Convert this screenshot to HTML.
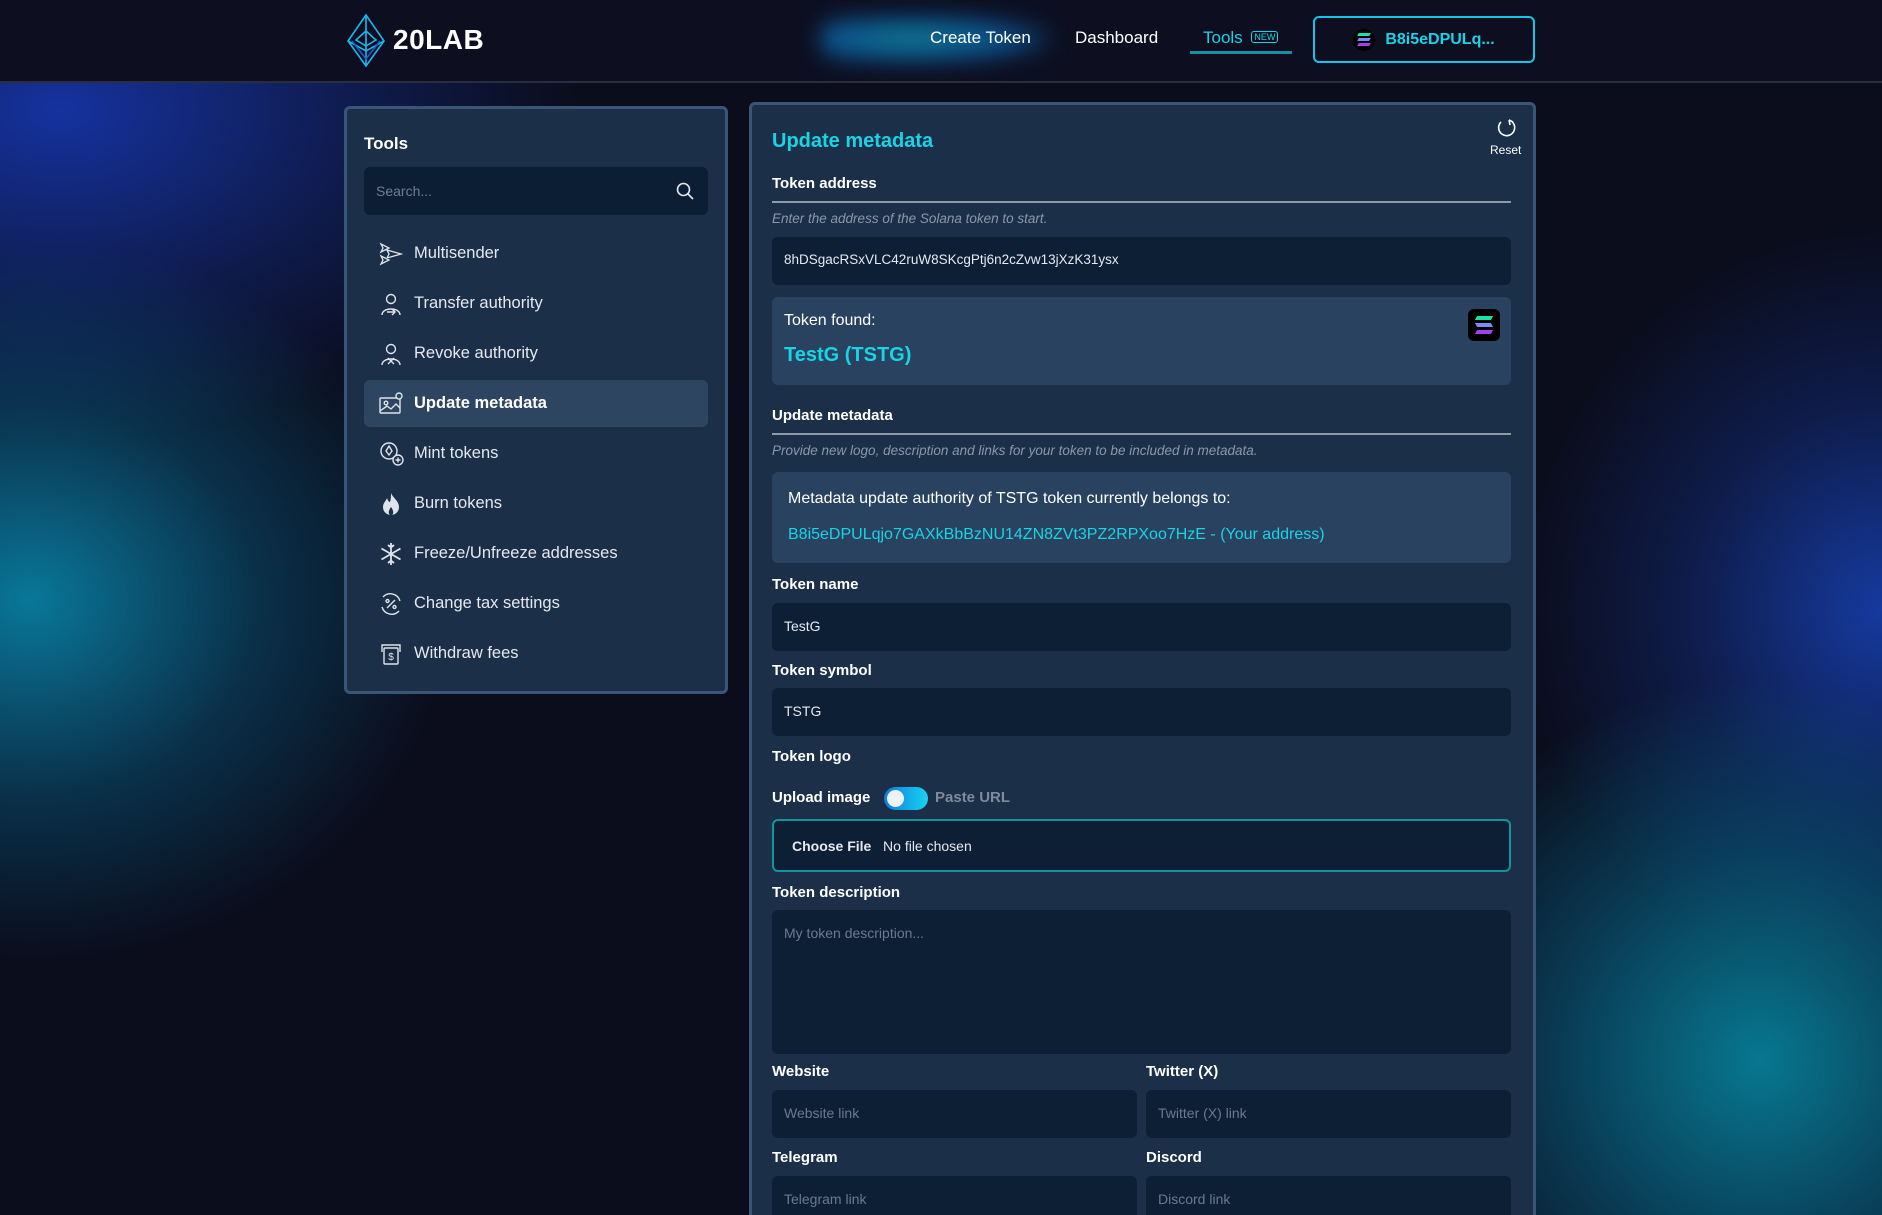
<!DOCTYPE html>
<html><head><meta charset="utf-8"><style>
*{box-sizing:border-box;margin:0;padding:0}
html,body{width:1882px;height:1215px;overflow:hidden;background:#0b0d1c}
body{font-family:"Liberation Sans",sans-serif;color:#fff}
#w{position:relative;width:1882px;height:1215px;overflow:hidden;
background:
radial-gradient(ellipse 420px 360px at 30px 600px,rgba(9,125,160,.95),rgba(9,100,140,.4) 55%,transparent 100%),
radial-gradient(ellipse 520px 330px at 60px 110px,rgba(22,52,165,.95),rgba(20,45,140,.4) 60%,transparent 100%),
radial-gradient(ellipse 380px 380px at 1760px 1060px,rgba(8,125,150,.95),rgba(8,100,135,.5) 55%,transparent 100%),
radial-gradient(ellipse 360px 380px at 1882px 610px,rgba(22,60,165,.95),rgba(20,50,140,.4) 55%,transparent 100%),
#0b0d1c;}
.hdr{position:absolute;left:0;top:0;width:1882px;height:83px;background:#0d0f21;border-bottom:2px solid #2a2d40}
.glow{position:absolute;left:820px;top:14px;width:230px;height:50px;border-radius:25px;background:radial-gradient(ellipse at 40% 50%,#0f7a8c 0%,#0c4e8a 50%,transparent 80%);filter:blur(10px)}
.nav{position:absolute;top:28px;font-size:17px}
.btn{position:absolute;left:1313px;top:16px;width:222px;height:47px;border:2px solid #13c6ea;border-radius:6px;color:#19d3e6;font-weight:bold;font-size:16px;display:flex;align-items:center;justify-content:center;gap:10px}
.sol{width:22px;height:22px;border-radius:50%;background:#000;display:flex;flex-direction:column;justify-content:center;align-items:center;gap:2px}
.sol i{display:block;width:12px;height:3px;transform:skewX(-30deg)}
.side{position:absolute;left:344px;top:106px;width:384px;height:588px;background:#1b2f49;border:3px solid #3a5677;border-radius:6px}
.side h3{position:absolute;left:17px;top:25px;font-size:17px}
.search{position:absolute;left:17px;top:58px;width:344px;height:48px;background:#0c1e33;border-radius:6px;color:#6d7e92;font-size:14px;padding:16px 12px}
.item{position:absolute;left:17px;width:344px;height:47px;display:flex;align-items:center;font-size:16.5px;color:#e5e9ef}
.item svg{position:absolute;left:15px}
.item span{position:absolute;left:50px}
.item.act{background:#2d4560;border-radius:6px;font-weight:bold;color:#fff}
.main{position:absolute;left:749px;top:102px;width:787px;height:1130px;background:#1b2f49;border:3px solid #3a5677;border-radius:6px}
.a{position:absolute}
.lbl{position:absolute;left:20px;font-size:15px;font-weight:bold}
.hint{position:absolute;left:20px;font-size:13.5px;font-style:italic;color:#8b98a8}
.line{position:absolute;left:20px;width:739px;height:2px;background:#8f9aa8}
.inp{position:absolute;left:20px;width:739px;height:48px;background:#0c1f35;border-radius:6px;font-size:14px;padding:15px 12px;color:#e6e9ee}
.ph{color:#6b7a8c}
.box{position:absolute;left:20px;width:739px;background:#29425f;border-radius:6px}
</style></head><body><div id="w">
<div class="hdr">
 <svg class="a" style="left:344px;top:13px" width="44" height="55" viewBox="0 0 44 55" fill="none" stroke="#1ab8ee" stroke-width="1.6"><path d="M22 2 L4 28 L22 53 L40 28 Z"/><path d="M22 2 L22 53 M4 28 L22 38 L40 28 M22 18 L12 27 L22 33 L32 27 Z"/><path d="M8 28 L22 46 L36 28" stroke="#1560d0"/></svg>
 <div class="a" style="left:393px;top:24px;font-size:28px;font-weight:bold;letter-spacing:0.5px">20LAB</div>
 <div class="glow"></div>
 <div class="nav" style="left:930px">Create Token</div>
 <div class="nav" style="left:1075px">Dashboard</div>
 <div class="nav" style="left:1203px;color:#19d3e6">Tools <span style="font-size:9px;border:1.5px solid #19d3e6;border-radius:3px;padding:0 2px;vertical-align:3px;margin-left:4px">NEW</span></div>
 <div class="a" style="left:1190px;top:51px;width:102px;height:3px;background:#148fa3"></div>
 <div class="btn"><div class="sol"><i style="background:#19e3a6"></i><i style="background:#7b8cf0"></i><i style="background:#a33ff0"></i></div>B8i5eDPULq...</div>
</div>

<div class="side">
 <h3>Tools</h3>
 <div class="search">Search...
  <svg class="a" style="right:14px;top:15px" width="18" height="18" viewBox="0 0 18 18" fill="none" stroke="#e5e9ef" stroke-width="1.6"><circle cx="7.5" cy="7.5" r="6"/><path d="M12 12 L17 17"/></svg></div>
 <div class="item" style="top:121px"><svg width="24" height="24" viewBox="0 0 24 24" fill="none" stroke="#dfe4ea" stroke-width="1.3"><path d="M2 2 L10 6 L2 10 L4 6Z M2 14 L10 18 L2 22 L4 18Z M8 8 L22 12 L8 16 L10 12Z"/></svg><span>Multisender</span></div>
 <div class="item" style="top:171px"><svg width="24" height="24" viewBox="0 0 24 24" fill="none" stroke="#dfe4ea" stroke-width="1.4"><circle cx="12" cy="7" r="4.5"/><path d="M3 23 C3 15 21 15 21 23 M8 20 H16 M13 17 L16 20 L13 23"/></svg><span>Transfer authority</span></div>
 <div class="item" style="top:221px"><svg width="24" height="24" viewBox="0 0 24 24" fill="none" stroke="#dfe4ea" stroke-width="1.4"><circle cx="12" cy="7" r="4.5"/><path d="M3 23 C3 15 21 15 21 23 M9 16 L15 22 M15 16 L9 22"/></svg><span>Revoke authority</span></div>
 <div class="item act" style="top:271px"><svg width="24" height="24" viewBox="0 0 24 24" fill="none" stroke="#dfe4ea" stroke-width="1.4"><rect x="1" y="6" width="20" height="15" rx="1"/><circle cx="7" cy="11" r="1.8"/><path d="M1 19 L8 14 L12 17 L17 12 L21 16"/><circle cx="20" cy="4" r="3" fill="#2d4560"/></svg><span>Update metadata</span></div>
 <div class="item" style="top:321px"><svg width="26" height="26" viewBox="0 0 26 26" fill="none" stroke="#dfe4ea" stroke-width="1.4"><circle cx="10" cy="10" r="8"/><path d="M10 5 L13 10 L10 14 L7 10Z"/><circle cx="19" cy="19" r="5" fill="#1b2f49"/><path d="M19 16.5 V21.5 M16.5 19 H21.5"/></svg><span>Mint tokens</span></div>
 <div class="item" style="top:371px"><svg width="24" height="24" viewBox="0 0 24 24" fill="#dfe4ea"><path d="M12 1 C14 6 20 9 20 15 C20 20 16 23 12 23 C8 23 4 20 4 15 C4 11 7 9 8 6 C9 9 10 10 11 10 C12 7 12 4 12 1Z M12 23 C9 23 9 19 12 15 C15 19 15 23 12 23Z" fill-rule="evenodd"/></svg><span>Burn tokens</span></div>
 <div class="item" style="top:421px"><svg width="24" height="24" viewBox="0 0 24 24" fill="none" stroke="#dfe4ea" stroke-width="1.8"><path d="M12 1 V23 M2.5 6.5 L21.5 17.5 M2.5 17.5 L21.5 6.5 M9 3 L12 5.5 L15 3 M9 21 L12 18.5 L15 21"/></svg><span>Freeze/Unfreeze addresses</span></div>
 <div class="item" style="top:471px"><svg width="24" height="24" viewBox="0 0 24 24" fill="none" stroke="#dfe4ea" stroke-width="1.4"><path d="M21 9 A10 10 0 0 0 4 5 M3 15 A10 10 0 0 0 20 19"/><path d="M8 16 L16 8"/><circle cx="8.5" cy="9" r="1.5"/><circle cx="15.5" cy="15" r="1.5"/></svg><span>Change tax settings</span></div>
 <div class="item" style="top:521px"><svg width="24" height="24" viewBox="0 0 24 24" fill="none" stroke="#dfe4ea" stroke-width="1.4"><path d="M3 10 V3 H21 V10"/><rect x="5" y="6" width="14" height="16" rx="1"/><text x="12" y="18" font-size="10" text-anchor="middle" fill="#dfe4ea" stroke="none" font-family="Liberation Sans">$</text></svg><span>Withdraw fees</span></div>
</div>

<div class="main">
 <div class="a" style="left:20px;top:25px;font-size:20px;font-weight:bold;color:#19d3e6">Update metadata</div>
 <svg class="a" style="left:743px;top:12px" width="22" height="22" viewBox="0 0 22 22" fill="none" stroke="#fff" stroke-width="1.6"><path d="M14 3 A8 8 0 1 1 6 5 M14 3 L15 8 M14 3 L18 5"/></svg>
 <div class="a" style="left:738px;top:38px;font-size:12px">Reset</div>
 <div class="lbl" style="top:70px">Token address</div>
 <div class="line" style="top:96px"></div>
 <div class="hint" style="top:106px">Enter the address of the Solana token to start.</div>
 <div class="inp" style="top:132px;font-size:13.5px">8hDSgacRSxVLC42ruW8SKcgPtj6n2cZvw13jXzK31ysx</div>
 <div class="box" style="top:192px;height:88px">
  <div class="a" style="left:12px;top:15px;font-size:16px">Token found:</div>
  <div class="a" style="left:12px;top:47px;font-size:20px;font-weight:bold;color:#19d3e6">TestG (TSTG)</div>
  <div class="a" style="left:696px;top:12px;width:32px;height:32px;border-radius:6px;background:#000;display:flex;flex-direction:column;align-items:center;justify-content:center;gap:3px"><i style="display:block;width:16px;height:4px;background:#19e3a6;transform:skewX(-30deg)"></i><i style="display:block;width:16px;height:4px;background:#7b8cf0;transform:skewX(30deg)"></i><i style="display:block;width:16px;height:4px;background:#a33ff0;transform:skewX(-30deg)"></i></div>
 </div>
 <div class="lbl" style="top:302px">Update metadata</div>
 <div class="line" style="top:328px"></div>
 <div class="hint" style="top:338px">Provide new logo, description and links for your token to be included in metadata.</div>
 <div class="box" style="top:367px;height:91px">
  <div class="a" style="left:16px;top:18px;font-size:16px">Metadata update authority of TSTG token currently belongs to:</div>
  <div class="a" style="left:16px;top:54px;font-size:16px;color:#19d3e6">B8i5eDPULqjo7GAXkBbBzNU14ZN8ZVt3PZ2RPXoo7HzE - (Your address)</div>
 </div>
 <div class="lbl" style="top:471px">Token name</div>
 <div class="inp" style="top:498px">TestG</div>
 <div class="lbl" style="top:557px">Token symbol</div>
 <div class="inp" style="top:583px">TSTG</div>
 <div class="lbl" style="top:643px">Token logo</div>
 <div class="lbl" style="top:684px">Upload image</div>
 <div class="a" style="left:132px;top:682px;width:44px;height:23px;border-radius:12px;background:linear-gradient(90deg,#0b7ddc,#19d3f0)"><div style="position:absolute;left:3px;top:3px;width:17px;height:17px;border-radius:50%;background:#eef1f7"></div></div>
 <div class="a" style="left:183px;top:684px;font-size:15px;font-weight:bold;color:#7d8b9b">Paste URL</div>
 <div class="inp" style="top:714px;height:53px;border:2px solid #14949f;padding:17px 18px;font-size:14px"><b>Choose File</b>&nbsp;&nbsp; No file chosen</div>
 <div class="lbl" style="top:779px">Token description</div>
 <div class="inp" style="top:805px;height:144px"><span class="ph">My token description...</span></div>
 <div class="lbl" style="top:958px">Website</div>
 <div class="lbl" style="left:394px;top:958px">Twitter (X)</div>
 <div class="inp" style="top:985px;width:365px"><span class="ph">Website link</span></div>
 <div class="inp" style="left:394px;top:985px;width:365px"><span class="ph">Twitter (X) link</span></div>
 <div class="lbl" style="top:1044px">Telegram</div>
 <div class="lbl" style="left:394px;top:1044px">Discord</div>
 <div class="inp" style="top:1071px;width:365px"><span class="ph">Telegram link</span></div>
 <div class="inp" style="left:394px;top:1071px;width:365px"><span class="ph">Discord link</span></div>
</div>
</div></body></html>
